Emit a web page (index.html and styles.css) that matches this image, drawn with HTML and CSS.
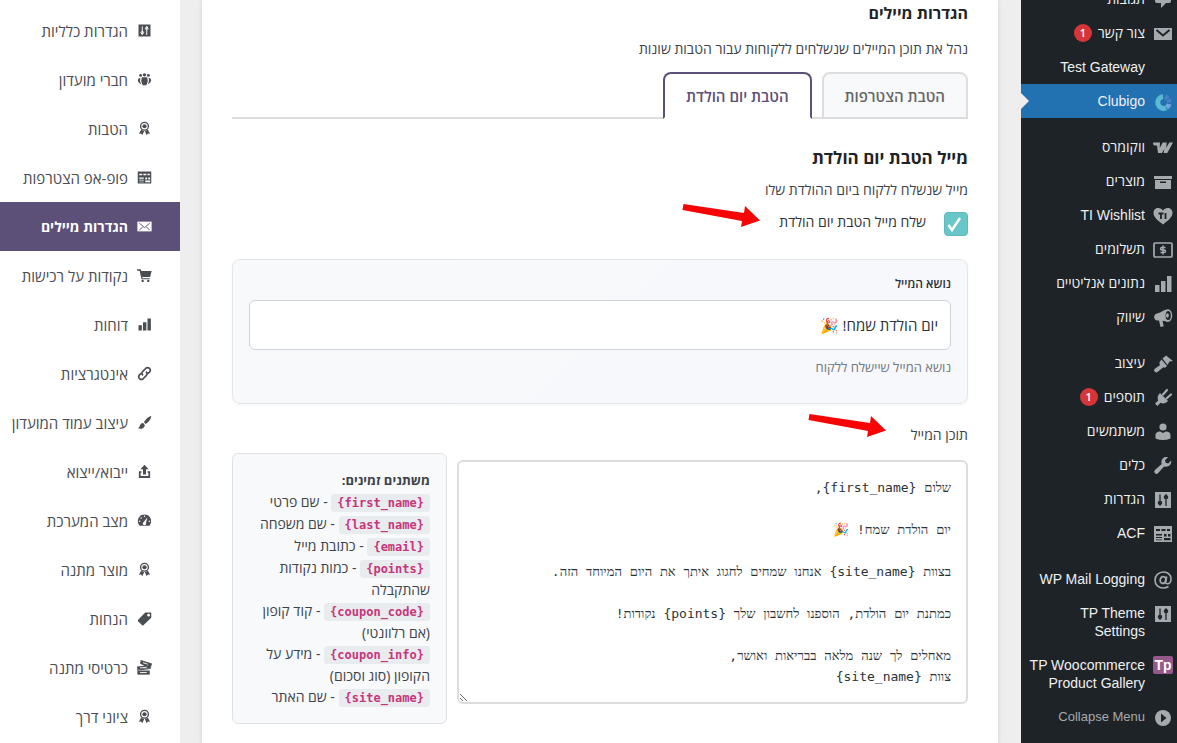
FILE: index.html
```html
<!DOCTYPE html>
<html lang="he" dir="rtl">
<head>
    <meta charset="UTF-8">
    <meta name="viewport" content="width=device-width, initial-scale=1.0">
    <title>Clubigo - הגדרות מיילים</title>
    <link rel="stylesheet" href="styles.css">
</head>
<body>

<!-- Icon set -->
<svg class="sprite" aria-hidden="true">
    <symbol id="i-comment" viewBox="0 0 20 20"><path d="M4 2h12q2 0 2 2v7q0 2-2 2h-3l-5 5v-5H4q-2 0-2-2V4q0-2 2-2z"/></symbol>
    <symbol id="i-mail" viewBox="0 0 20 20"><path d="M.500 3.500h19v13H.500z"/><path d="M3 5.500l7 6 7-6M3 15l4.500-4.500M17 15l-4.500-4.500" fill="none" stroke="var(--bg)" stroke-width="1.300"/></symbol>
    <symbol id="i-mail-solid" viewBox="0 0 20 20"><path d="M1 4h18v12H1z"/><path d="M3.500 6l6.500 5.500L16.500 6" fill="none" stroke="var(--bg)" stroke-width="2"/></symbol>
    <symbol id="i-woo" viewBox="0 0 20 20"><path d="M0 4.500h7L6.700 10l3.100-5.500h3.900L13.200 10l3.100-5.500H20L14.300 15h-3.600l.6-4L9 15H5L4 7.500H1.500Q0 7 0 4.500z"/></symbol>
    <symbol id="i-box" viewBox="0 0 20 20"><path d="M1 4h18v3H1zM2 8h16v9H2z"/><path d="M7 9.500h6V11H7z" fill="var(--bg)"/></symbol>
    <symbol id="i-heart" viewBox="0 0 20 20"><path d="M10 18.500C4 14 .500 11 .500 6.800.500 3.800 2.700 2 5.200 2 7.300 2 9 3 10 4.800 11 3 12.700 2 14.800 2c2.500 0 4.700 1.800 4.700 4.800 0 4.200-3.500 7.200-9.500 11.700z"/><path d="M5.500 7.500h5M8 7.500V13M12.500 7V13" fill="none" stroke="var(--bg)" stroke-width="1.800"/></symbol>
    <symbol id="i-money" viewBox="0 0 20 20"><rect x="1" y="3" width="18" height="14" rx="1" fill="none" stroke="currentColor" stroke-width="1.700"/><path d="M12.500 7.500H9q-1.500 0-1.500 1.200T9 10h2q1.500 0 1.500 1.200T11 12.500H7.500M10 5.500v9" fill="none" stroke="currentColor" stroke-width="1.500"/></symbol>
    <symbol id="i-bars" viewBox="0 0 20 20"><path d="M2 11h4.500v7H2zM8 7h4.500v11H8zM14 2h4.500v16H14z"/></symbol>
    <symbol id="i-horn" viewBox="0 0 20 20"><path d="M14 1.500c-3 0-5 2.500-7 3L4 5.500C2 6 1 7.500 1.200 9.500s1.500 3 3.300 3l1.500 0 1.500 6.500 3.200-.7-1.200-5.500c2 0 3.500 1 5.500 1z"/><ellipse cx="15" cy="7.500" rx="4.200" ry="6.300"/><ellipse cx="15.200" cy="7.500" rx="2.600" ry="4.600" fill="var(--bg)"/><ellipse cx="14.400" cy="7.500" rx="1.400" ry="2.300"/></symbol>
    <symbol id="i-paint" viewBox="0 0 20 20"><path d="M9.500 4.500L13 1.500 20 7l-3.500.5-2 3.500zM8.500 5.500l5.500 6.500-1 1c-1 .8-2 .8-2.700.2L4.500 18q-1.300 1-2.700-.3T1.500 15l5.700-4c-1-1-1-2-.2-3.500z"/></symbol>
    <symbol id="i-plug" viewBox="0 0 20 20"><path d="M7 5l8 8c-2 2.500-5 3-7.500 1.800L4.500 18 2 15.500l3.200-3C4 10 4.700 7 7 5z"/><path d="M10 6.500l4-4.500M13.500 10.500L18 6.500" stroke="currentColor" stroke-width="2.200" stroke-linecap="round"/></symbol>
    <symbol id="i-user" viewBox="0 0 20 20"><circle cx="10" cy="5" r="3.600"/><path d="M2.500 16.500v-3c0-3 2-4 4.700-4L10 11l2.800-1.500c2.700 0 4.700 1 4.700 4v3q-7.500 3-15 0z"/></symbol>
    <symbol id="i-wrench" viewBox="0 0 20 20"><path d="M16.700 9.300c-1.500 1.500-3.700 1.800-5.600 1.100L5 17.200q-1.600 1.500-3.100 0t0-3.100L8.700 8C8 6.200 8.300 4 9.800 2.500 11.200 1.100 13.200.700 15 1.200L12 4.300l.700 2.500 2.500.700L18.100 4.500c.4 1.700 0 3.500-1.400 4.800z"/></symbol>
    <symbol id="i-settings" viewBox="0 0 20 20"><path d="M2 2h16v16H2z"/><path d="M7 4.500V15M13 5V16M5 12h4M11 8h4M13 4.500l-2 3M13 4.500l2 3M7 15.500l-2-3M7 15.500l2-3" fill="none" stroke="var(--bg)" stroke-width="1.300"/></symbol>
    <symbol id="i-table" viewBox="0 0 20 20"><path d="M1 2h18v16H1z"/><path d="M3 5h4v2H3zM8.500 5h4v2h-4zM14 5h3v2h-3zM3 10h6v1.500H3zM3 13h6v1H3zM3 15.500h6v.8H3zM11 10h2.500v2.500H11zM15 10h2.500v2.500H15zM11 14h6.500v2.300H11z" fill="var(--bg)"/></symbol>
    <symbol id="i-at" viewBox="0 0 20 20"><path d="M15.500 16.500c-1.500 1-3.200 1.500-5.200 1.500C5.500 18 2 14.800 2 10.200 2 5.500 5.500 2 10.500 2c4.400 0 7.500 2.800 7.500 6.800 0 3-1.500 5-3.600 5-1.400 0-2-1-1.700-2.500L13.700 6.500" fill="none" stroke="currentColor" stroke-width="1.600"/><ellipse cx="10" cy="10" rx="2.800" ry="3.400" fill="none" stroke="currentColor" stroke-width="1.700" transform="rotate(18 10 10)"/></symbol>
    <symbol id="i-collapse" viewBox="0 0 20 20"><circle cx="10" cy="10" r="8"/><path d="M8 5.500l5.500 4.500L8 14.500z" fill="var(--bg)"/></symbol>
    <symbol id="i-group" viewBox="0 0 20 20"><circle cx="10" cy="3.800" r="2.300"/><circle cx="4.800" cy="4.500" r="1.900"/><circle cx="15.200" cy="4.500" r="1.900"/><path d="M6.500 7h7l1 5-2 5.500h-5L5.500 12zM4.500 7.500L4 12l1.500 4.500C3 15 1.200 13 1 10.500Q1.500 8 4.500 7.500zM15.500 7.500L16 12l-1.500 4.500c2.500-1.500 4.300-3.500 4.500-6q-.5-2.500-3.500-3z"/></symbol>
    <symbol id="i-award" viewBox="0 0 20 20"><circle cx="10" cy="7" r="5.200" fill="none" stroke="currentColor" stroke-width="1.800"/><circle cx="10" cy="7" r="2.800"/><path d="M5.500 11.500L2.500 17l3-.3L7 19l2.500-5.500zM14.500 11.500l3 5.500-3-.3L13 19l-2.500-5.500z"/></symbol>
    <symbol id="i-cart" viewBox="0 0 20 20"><path d="M0 1.500h4.800l1 2.500H19.500L17.500 12H7l.3 1.500H17V15H6L3.500 3.500H0z"/><circle cx="7.500" cy="17.200" r="1.600"/><circle cx="15" cy="17.200" r="1.600"/></symbol>
    <symbol id="i-link" viewBox="0 0 20 20"><path d="M8 12.500c-2-2-1.800-3.800-.3-5.300l3.800-3.900c1.600-1.500 3.700-1.500 5.100-.1s1.400 3.500 0 5L14.500 10M12 7.500c2 2 1.800 3.800.3 5.300l-3.800 3.900c-1.600 1.500-3.700 1.500-5.100.1s-1.400-3.500 0-5L5.500 10" fill="none" stroke="currentColor" stroke-width="2.200"/></symbol>
    <symbol id="i-brush" viewBox="0 0 20 20"><path d="M19 1.200c-3 .3-7.500 4.300-9.700 8.300l2.200 2.500C15.500 9.500 19 5 19 1.200zM8.300 10.800c-2-.1-3.700 1-4.300 3.300-.4 1.600-1.300 2.900-2.800 3.700 3.500 1.200 8.500.6 9.300-4.300z"/></symbol>
    <symbol id="i-upload" viewBox="0 0 20 20"><path d="M10 1L4.500 7H8v7h4V7h3.500z"/><path d="M2.500 9.500H6v2H4.800V16h10.400v-4.500H14v-2h3.500v9h-15z"/></symbol>
    <symbol id="i-gauge" viewBox="0 0 20 20"><path d="M3.500 17C.500 13.500.300 8.500 3 5.200c3.500-4.300 10.500-4.300 14 0 2.700 3.300 2.500 8.300-.5 11.800z"/><path d="M14 5.500l-2 7.500a2.300 2.300 0 1 1-3-1z" fill="var(--bg)"/><g fill="var(--bg)"><circle cx="10" cy="4.200" r="1"/><circle cx="5.500" cy="6.500" r="1"/><circle cx="3.500" cy="11" r="1"/><circle cx="16.500" cy="11" r="1"/></g></symbol>
    <symbol id="i-tag" viewBox="0 0 20 20"><path d="M11 2h8v7L8.500 19q-1 .5-2-.5l-5-5q-.8-1 0-2z"/><circle cx="15.500" cy="5.500" r="1.800" fill="var(--bg)"/></symbol>
    <symbol id="i-tickets" viewBox="0 0 20 20"><path d="M5 0l15 4.500-1 4-5-1.500-2 2L4 4.500z"/><path d="M0 8.500l18-1.500.5 3.500-18 2z"/><path d="M.500 14H17v5.500H.500z"/><path d="M0 13.300l18-2" stroke="currentColor" stroke-width="1.500"/><path d="M4 16.700h9M4 10.500l9-.8M8 3.500l6 2" stroke="var(--bg)" stroke-width="1.200"/></symbol>
</svg>

<div class="shell">
    <!-- WordPress admin menu -->
    <nav class="admin-menu">
        <ul>
            <li><a href="#"><svg class="icon"><use href="#i-comment"/></svg><span>תגובות</span></a></li>
            <li><a href="#"><svg class="icon"><use href="#i-mail-solid"/></svg><span>צור קשר</span><span class="count">1</span></a></li>
            <li lang="en"><a href="#"><span class="icon"></span><span>Test Gateway</span></a></li>
            <li lang="en" class="current"><a href="#">
                <svg class="icon logo" viewBox="0 0 20 20"><path d="M10 4.500A6 6 0 1 0 13 16" stroke="#5cb9d4"/><path d="M13.500 15.700A6 6 0 0 0 16 12" stroke="#6fa3e0"/><path d="M16 10.500A6 6 0 0 0 11 4.600" stroke="#4a80c4" stroke-dasharray="3 1"/></svg>
                <span>Clubigo</span></a></li>
            <li class="separator"></li>
            <li><a href="#"><svg class="icon"><use href="#i-woo"/></svg><span>ווקומרס</span></a></li>
            <li><a href="#"><svg class="icon"><use href="#i-box"/></svg><span>מוצרים</span></a></li>
            <li lang="en"><a href="#"><svg class="icon"><use href="#i-heart"/></svg><span>TI Wishlist</span></a></li>
            <li><a href="#"><svg class="icon"><use href="#i-money"/></svg><span>תשלומים</span></a></li>
            <li><a href="#"><svg class="icon"><use href="#i-bars"/></svg><span>נתונים אנליטיים</span></a></li>
            <li><a href="#"><svg class="icon"><use href="#i-horn"/></svg><span>שיווק</span></a></li>
            <li class="separator"></li>
            <li><a href="#"><svg class="icon"><use href="#i-paint"/></svg><span>עיצוב</span></a></li>
            <li><a href="#"><svg class="icon"><use href="#i-plug"/></svg><span>תוספים</span><span class="count">1</span></a></li>
            <li><a href="#"><svg class="icon"><use href="#i-user"/></svg><span>משתמשים</span></a></li>
            <li><a href="#"><svg class="icon"><use href="#i-wrench"/></svg><span>כלים</span></a></li>
            <li><a href="#"><svg class="icon"><use href="#i-settings"/></svg><span>הגדרות</span></a></li>
            <li lang="en"><a href="#"><svg class="icon"><use href="#i-table"/></svg><span>ACF</span></a></li>
            <li class="separator"></li>
            <li lang="en"><a href="#"><svg class="icon"><use href="#i-at"/></svg><span>WP Mail Logging</span></a></li>
            <li lang="en"><a href="#"><svg class="icon"><use href="#i-settings"/></svg><span>TP Theme Settings</span></a></li>
            <li lang="en"><a href="#"><span class="icon tp-logo">Tp</span><span>TP Woocommerce Product Gallery</span></a></li>
            <li lang="en"><button type="button" class="collapse"><svg class="icon"><use href="#i-collapse"/></svg><span>Collapse Menu</span></button></li>
        </ul>
    </nav>

    <main class="panel">
        <h2 class="page-title">הגדרות מיילים</h2>
        <p class="lead">נהל את תוכן המיילים שנשלחים ללקוחות עבור הטבות שונות</p>

        <div class="tabs">
            <button type="button" class="tab">הטבת הצטרפות</button>
            <button type="button" class="tab active">הטבת יום הולדת</button>
        </div>

        <h3 class="section-title">מייל הטבת יום הולדת</h3>
        <p class="section-text">מייל שנשלח ללקוח ביום ההולדת שלו</p>

        <div class="check-row">
            <input type="checkbox" id="send_birthday" checked>
            <label for="send_birthday">שלח מייל הטבת יום הולדת</label>
            <svg class="arrow arrow-check" viewBox="0 0 80 26"><path d="M2.500 2l-1 6L61 19l-1 6 19-6.500L64 4l-1 7z"/></svg>
        </div>

        <div class="subject-card">
            <label for="subject">נושא המייל</label>
            <input type="text" id="subject" value="יום הולדת שמח! 🎉">
            <p class="hint">נושא המייל שיישלח ללקוח</p>
        </div>

        <div class="content-label">
            <label for="content">תוכן המייל</label>
            <svg class="arrow arrow-content" viewBox="0 0 80 26"><path d="M2.500 2l-1 6L61 19l-1 6 19-6.500L64 4l-1 7z"/></svg>
        </div>

        <div class="editor">
            <textarea id="content" spellcheck="false">שלום {first_name},

יום הולדת שמח! 🎉

בצוות {site_name} אנחנו שמחים לחגוג איתך את היום המיוחד הזה.

כמתנת יום הולדת, הוספנו לחשבון שלך {points} נקודות!

מאחלים לך שנה מלאה בבריאות ואושר,
צוות {site_name}</textarea>
            <aside class="variables">
                <strong>משתנים זמינים:</strong>
                <ul>
                    <li><code>{first_name}</code> - שם פרטי</li>
                    <li><code>{last_name}</code> - שם משפחה</li>
                    <li><code>{email}</code> - כתובת מייל</li>
                    <li><code>{points}</code> - כמות נקודות שהתקבלה</li>
                    <li><code>{coupon_code}</code> - קוד קופון (אם רלוונטי)</li>
                    <li><code>{coupon_info}</code> - מידע על הקופון (סוג וסכום)</li>
                    <li><code>{site_name}</code> - שם האתר</li>
                </ul>
            </aside>
        </div>
    </main>

    <!-- Plugin menu -->
    <nav class="club-menu">
        <a href="#"><svg class="icon"><use href="#i-settings"/></svg>הגדרות כלליות</a>
        <a href="#"><svg class="icon"><use href="#i-group"/></svg>חברי מועדון</a>
        <a href="#"><svg class="icon"><use href="#i-award"/></svg>הטבות</a>
        <a href="#"><svg class="icon"><use href="#i-table"/></svg>פופ-אפ הצטרפות</a>
        <a href="#" class="active"><svg class="icon"><use href="#i-mail"/></svg>הגדרות מיילים</a>
        <a href="#"><svg class="icon"><use href="#i-cart"/></svg>נקודות על רכישות</a>
        <a href="#"><svg class="icon"><use href="#i-bars"/></svg>דוחות</a>
        <a href="#"><svg class="icon"><use href="#i-link"/></svg>אינטגרציות</a>
        <a href="#"><svg class="icon"><use href="#i-brush"/></svg>עיצוב עמוד המועדון</a>
        <a href="#"><svg class="icon"><use href="#i-upload"/></svg>ייבוא/ייצוא</a>
        <a href="#"><svg class="icon"><use href="#i-gauge"/></svg>מצב המערכת</a>
        <a href="#"><svg class="icon"><use href="#i-award"/></svg>מוצר מתנה</a>
        <a href="#"><svg class="icon"><use href="#i-tag"/></svg>הנחות</a>
        <a href="#"><svg class="icon"><use href="#i-tickets"/></svg>כרטיסי מתנה</a>
        <a href="#"><svg class="icon"><use href="#i-award"/></svg>ציוני דרך</a>
    </nav>
</div>

</body>
</html>
```
FILE: styles.css
```css
* {
    box-sizing: border-box;
}
body {
    margin: 0;
    background-color: #eeeeef;
    color: #3c434a;
    font-family: "Open Sans", "Noto Sans", sans-serif;
    font-size: 14px;
    line-height: 20px;
}
h2, h3, p, ul {
    margin: 0;
    padding: 0;
}
ul {
    list-style: none;
}
a {
    color: inherit;
    text-decoration: none;
}
button, input, textarea {
    font-family: inherit;
}
.sprite {
    display: none;
}
.icon {
    flex: none;
    width: 20px;
    height: 20px;
    fill: currentColor;
}
.shell {
    display: flex;
    height: 100vh;
    overflow: hidden;
}

/* admin menu */
.admin-menu {
    --bg: #1d2327;
    flex: none;
    width: 156px;
    background-color: #1d2327;
    color: #f0f0f1;
    line-height: 18px;
}
.admin-menu ul {
    margin-top: -18px;
}
.admin-menu li {
    position: relative;
}
.admin-menu li:lang(en) {
    font-family: "Liberation Sans", sans-serif;
}
.admin-menu a, .collapse {
    display: flex;
    gap: 8px;
    padding: 8px 4px 8px 8px;
}
.admin-menu .icon {
    margin-bottom: -2px;
    color: #a7aaad;
}
.admin-menu .logo {
    fill: none;
    stroke-width: 5;
}
.admin-menu .separator {
    height: 12px;
}
.admin-menu .current {
    background-color: #2271b1;
}
.admin-menu .current::after {
    content: "";
    position: absolute;
    left: 0;
    top: 9px;
    border: 8px solid transparent;
    border-left-color: #eeeeef;
    border-right-width: 0;
}
.count {
    width: 18px;
    height: 18px;
    margin-right: -2px;
    border-radius: 9px;
    background-color: #d63638;
    color: #fff;
    font-size: 11px;
    font-weight: 600;
    text-align: center;
}
.admin-menu .tp-logo {
    height: 18px;
    margin-bottom: 0;
    border-radius: 2px;
    background-color: #96588a;
    color: #fff;
    font-weight: bold;
    text-align: center;
}
.collapse {
    border: none;
    background: none;
    color: #a7aaad;
    font-size: 13px;
    line-height: 18px;
}

/* settings panel */
.panel {
    flex: 1;
    min-width: 0;
    margin: 0 22px 0 21px;
    padding: 1px 30px 30px;
    background-color: #fff;
    border: 1px solid #e2e2e4;
    border-width: 0 1px;
    box-shadow: 0 1px 4px rgba(0, 0, 0, 0.08);
}
.page-title {
    color: #1d2327;
    font-size: 16px;
    line-height: 24px;
}
.lead {
    margin-top: 14px;
}
.tabs {
    display: flex;
    gap: 10px;
    margin-top: 13px;
    border-bottom: 2px solid #dddddf;
}
.tab {
    height: 47px;
    margin-bottom: -2px;
    padding: 0 21px;
    border: 2px solid #dddddf;
    border-radius: 8px 8px 0 0;
    background-color: #f8f9fa;
    color: #666;
    font-size: 15px;
    font-weight: 600;
    cursor: pointer;
}
.tab.active {
    border-color: #5c4f78;
    border-bottom-color: #fff;
    background-color: #fff;
    color: #5c4f78;
}
.section-title {
    margin-top: 27px;
    color: #1d2327;
    font-size: 17px;
    line-height: 24px;
}
.section-text {
    margin-top: 10px;
}
.check-row {
    display: flex;
    gap: 18px;
    position: relative;
    margin-top: 12px;
    color: #2c3338;
    font-weight: 500;
}
.check-row input {
    appearance: none;
    width: 24px;
    height: 24px;
    margin: 0;
    border: 1px solid #5fb8bb;
    border-radius: 4px;
    background: #68c5c8 url("data:image/svg+xml,%3Csvg xmlns='http://www.w3.org/2000/svg' viewBox='0 0 22 22'%3E%3Cpath d='M3.500 12l3.500 5 8-12' fill='none' stroke='white' stroke-width='2.500'/%3E%3C/svg%3E") center no-repeat;
}
.arrow {
    position: absolute;
    width: 80px;
    height: 26px;
    fill: #f70505;
}
.arrow-check {
    right: 207px;
    top: -10px;
}
.arrow-content {
    right: 81px;
    top: -13px;
}
.subject-card {
    margin-top: 23px;
    padding: 14px 16px 26px;
    border: 1px solid #e4e6ea;
    border-radius: 8px;
    background: linear-gradient(135deg, #f8f9fa, #f6f8fc);
    box-shadow: 0 1px 3px rgba(0, 0, 0, 0.04);
}
.subject-card label {
    display: block;
    color: #2c3338;
    font-size: 12px;
    font-weight: 600;
}
.subject-card input {
    display: block;
    width: 100%;
    height: 50px;
    margin-top: 6px;
    padding: 0 12px;
    border: 1px solid #cfd2d6;
    border-radius: 6px;
    color: #2c3338;
    font-size: 15px;
}
.hint {
    margin-top: 7px;
    color: #72777c;
    font-size: 13px;
}
.content-label {
    position: relative;
    margin-top: 21px;
}
.editor {
    display: flex;
    align-items: flex-start;
    gap: 10px;
    margin-top: 8px;
}
.editor textarea {
    flex: 1;
    min-width: 0;
    height: 244px;
    margin-top: 7px;
    padding: 15px;
    border: 2px solid #dddddf;
    border-radius: 6px;
    color: #2c3338;
    font-family: "DejaVu Sans Mono", "Liberation Serif", monospace;
    font-size: 13px;
    line-height: 21px;
}
.variables {
    flex: none;
    width: 215px;
    padding: 15px 16px;
    border: 1px solid #dfe1e4;
    border-radius: 6px;
    background-color: #f8f9fa;
    line-height: 21px;
}
.variables strong {
    font-size: 13px;
}
.variables code {
    padding: 2px 6px;
    border-radius: 3px;
    background-color: #e9ecef;
    color: #c7357a;
    font-family: "DejaVu Sans Mono", monospace;
    font-size: 12px;
    font-weight: bold;
    line-height: 20px;
}

/* plugin menu */
.club-menu {
    --bg: #fff;
    flex: none;
    width: 180px;
    padding-top: 6px;
    background-color: #fff;
    color: #4a4d52;
    font-size: 15px;
}
.club-menu a {
    display: flex;
    align-items: center;
    gap: 9px;
    height: 49px;
    padding-right: 28px;
}
.club-menu .icon {
    width: 15px;
    height: 15px;
}
.club-menu .active {
    --bg: #5c4f78;
    background-color: #5c4f78;
    color: #fff;
    font-size: 14px;
    font-weight: bold;
}
```
